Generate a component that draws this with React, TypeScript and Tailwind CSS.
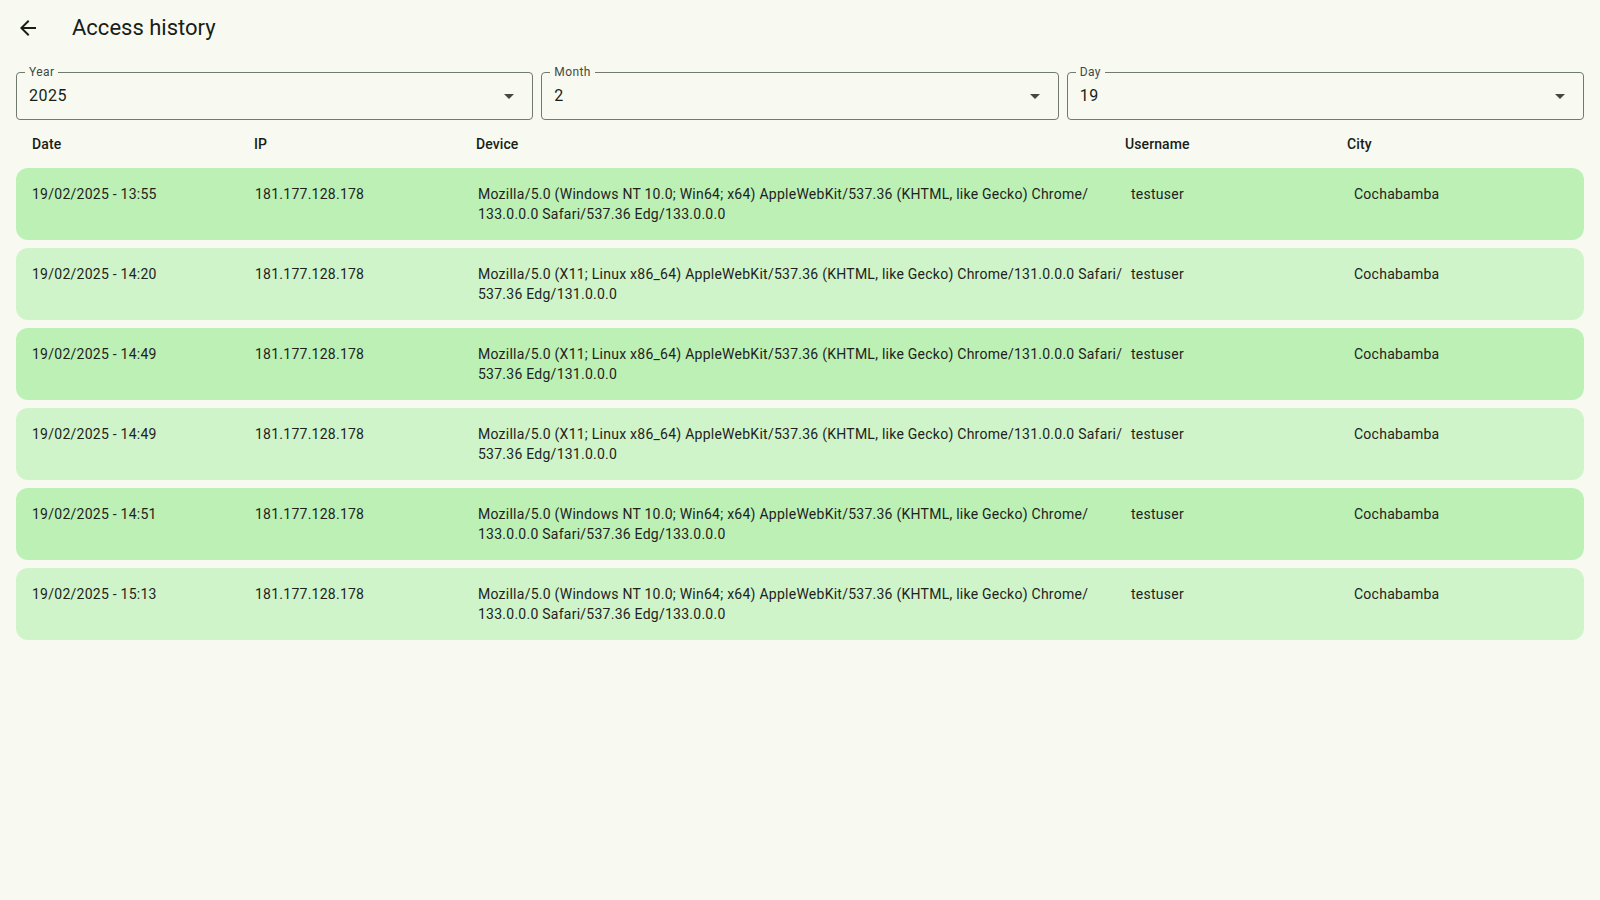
import React from "react";

const rows = [
  { date: "19/02/2025 - 13:55", device: "Mozilla/5.0 (Windows NT 10.0; Win64; x64) AppleWebKit/537.36 (KHTML, like Gecko) Chrome/133.0.0.0 Safari/537.36 Edg/133.0.0.0" },
  { date: "19/02/2025 - 14:20", device: "Mozilla/5.0 (X11; Linux x86_64) AppleWebKit/537.36 (KHTML, like Gecko) Chrome/131.0.0.0 Safari/537.36 Edg/131.0.0.0" },
  { date: "19/02/2025 - 14:49", device: "Mozilla/5.0 (X11; Linux x86_64) AppleWebKit/537.36 (KHTML, like Gecko) Chrome/131.0.0.0 Safari/537.36 Edg/131.0.0.0" },
  { date: "19/02/2025 - 14:49", device: "Mozilla/5.0 (X11; Linux x86_64) AppleWebKit/537.36 (KHTML, like Gecko) Chrome/131.0.0.0 Safari/537.36 Edg/131.0.0.0" },
  { date: "19/02/2025 - 14:51", device: "Mozilla/5.0 (Windows NT 10.0; Win64; x64) AppleWebKit/537.36 (KHTML, like Gecko) Chrome/133.0.0.0 Safari/537.36 Edg/133.0.0.0" },
  { date: "19/02/2025 - 15:13", device: "Mozilla/5.0 (Windows NT 10.0; Win64; x64) AppleWebKit/537.36 (KHTML, like Gecko) Chrome/133.0.0.0 Safari/537.36 Edg/133.0.0.0" },
];

function Device({ text }: { text: string }) {
  const parts = text.split("/");
  return (
    <>
      {parts.map((p, i) => (
        <React.Fragment key={i}>
          {p}
          {i < parts.length - 1 ? (
            <>
              /<wbr />
            </>
          ) : null}
        </React.Fragment>
      ))}
    </>
  );
}

function Select({ label, value }: { label: string; value: string }) {
  return (
    <div className="relative h-12 rounded-[4px] border border-[#72796f]">
      <span className="absolute -top-[9px] left-[8px] bg-[#f8faf2] px-1 text-[12px] leading-[16px] tracking-[0.4px] text-[#42493f]">
        {label}
      </span>
      <div className="flex h-full items-center pl-3 pr-3 text-[16px] tracking-[0.5px] text-[#191d17]">
        {value}
      </div>
      <svg
        className="absolute right-[11px] top-1/2 -translate-y-1/2"
        width="24"
        height="24"
        viewBox="0 0 24 24"
      >
        <path d="M7 10l5 5 5-5z" fill="#42493f" />
      </svg>
    </div>
  );
}

export default function App() {
  return (
    <div
      className="min-h-[900px] w-full bg-[#f8faf2] text-[#191d17]"
      style={{ fontFamily: "Roboto, 'Noto Sans', sans-serif" }}
    >
      <div className="flex h-14 items-center gap-8 px-4">
        <svg width="24" height="24" viewBox="0 0 24 24">
          <path
            d="M20 11H7.83l5.59-5.59L12 4l-8 8 8 8 1.41-1.41L7.83 13H20v-2z"
            fill="#191d17"
          />
        </svg>
        <h1 className="text-[22px] leading-[28px] text-[#191d17]">Access history</h1>
      </div>
      <div className="px-4">
        <div className="mt-4 grid grid-cols-3 gap-2">
          <Select label="Year" value="2025" />
          <Select label="Month" value="2" />
          <Select label="Day" value="19" />
        </div>
        <div className="grid h-12 grid-cols-[222px_222px_649px_222px_1fr] items-center px-4 text-[14px] font-medium tracking-[0.1px] text-[#191d17]">
          <div>Date</div>
          <div>IP</div>
          <div>Device</div>
          <div>Username</div>
          <div>City</div>
        </div>
        <div className="flex flex-col gap-2">
          {rows.map((r, i) => (
            <div
              key={i}
              className={
                "grid grid-cols-[223px_223px_653px_223px_1fr] rounded-xl px-4 py-4 text-[14px] leading-[20px] tracking-[0.25px] text-[#1f231d] " +
                (i % 2 === 0 ? "bg-[#bcf0b5]" : "bg-[#cff4c9]")
              }
            >
              <div>{r.date}</div>
              <div>181.177.128.178</div>
              <div className="pr-2">
                <Device text={r.device} />
              </div>
              <div>testuser</div>
              <div>Cochabamba</div>
            </div>
          ))}
        </div>
      </div>
    </div>
  );
}
